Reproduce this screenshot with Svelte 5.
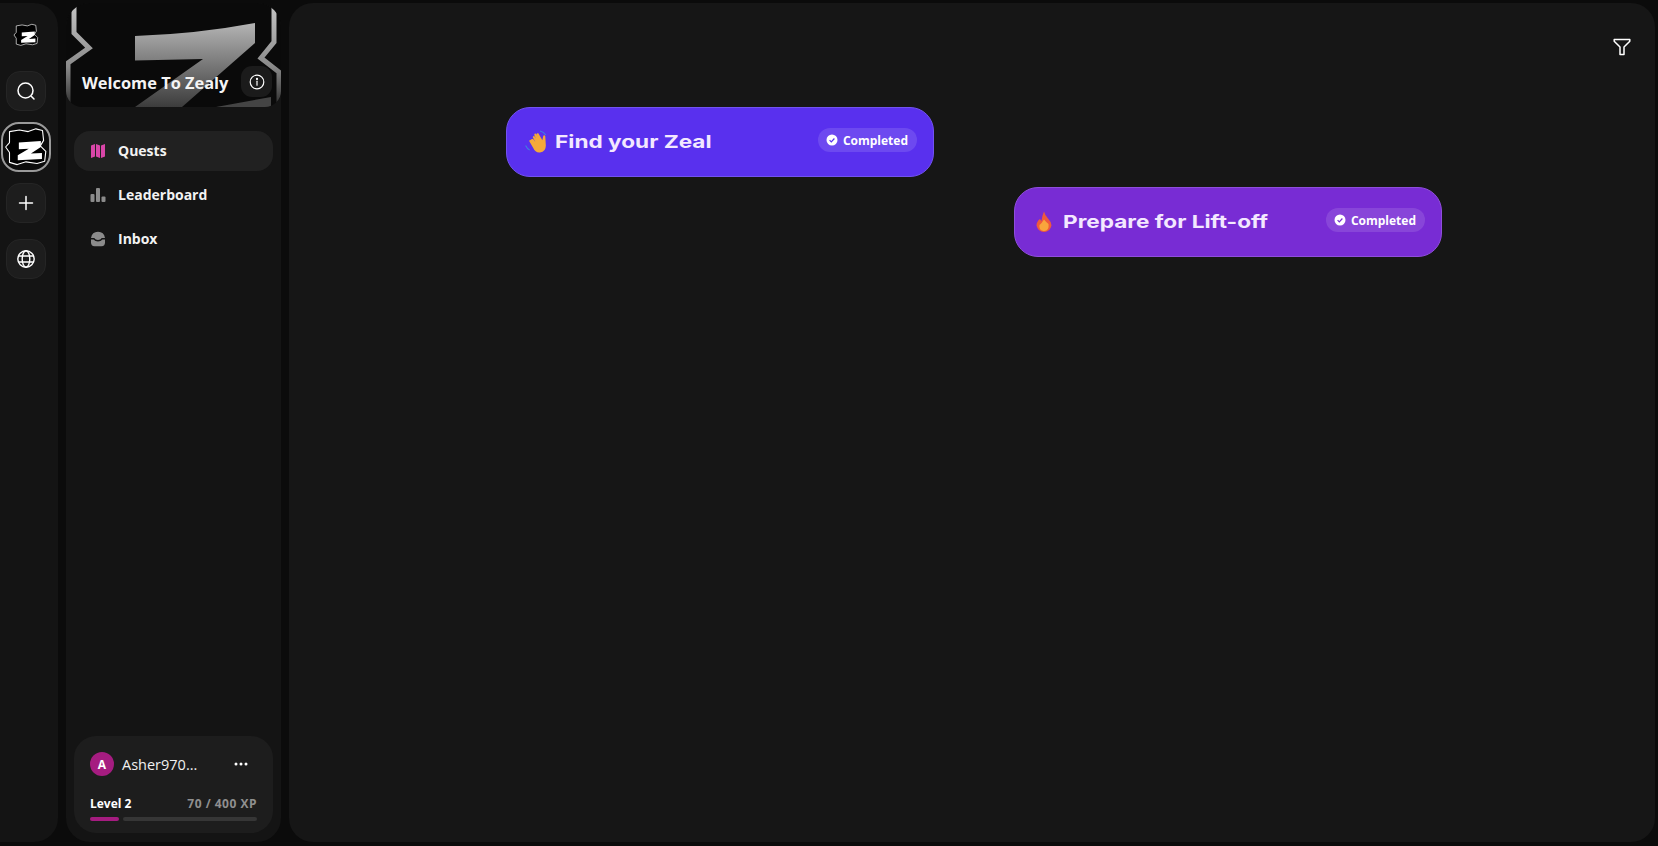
<script>
  // quest map page with the community rail and sidebar
  const navItems = [
    { label: 'Quests', icon: 'map', active: true },
    { label: 'Leaderboard', icon: 'bars' },
    { label: 'Inbox', icon: 'inbox' }
  ];

  const modules = [
    { title: 'Find your Zeal', icon: 'wave', color: 'indigo', check: '#5930ee', x: 217, y: 104 },
    { title: 'Prepare for Lift-off', icon: 'flame', color: 'violet', check: '#782cd4', x: 725, y: 184 }
  ];

  const xp = 70;
  const xpMax = 400;
</script>

{#snippet logo(size)}
  <svg width={size} height={size} viewBox="0 0 40 40" fill="none">
    <path d="M5 6 L14 4.5 L22 6 L29 3.5 L35 5 L36 14 L33 19 L38 24 L37 33 L30 35 L20 33.5 L12 36 L5 34 L5 25 L1.5 20 L5 16 Z" fill="#000" stroke="#fff" stroke-width="1" stroke-linejoin="round" />
    <path d="M13.5 16 L33.5 14.5 L33.5 20 L24.5 26 L34.5 25.5 L34.5 31 L12.5 32 L12.5 27.5 L22.5 21.5 L13.5 22 Z" fill="#fff" />
  </svg>
{/snippet}

<div class="page">
  <aside class="rail">
    <div class="rail-logo">{@render logo(26)}</div>
    <button class="rail-btn" aria-label="Search">
      <svg width="20" height="20" viewBox="0 0 20 20" fill="none" stroke="#fff" stroke-width="1.5" stroke-linecap="round">
        <circle cx="9.5" cy="9.5" r="7.5" />
        <path d="M15.5 15.5 L18 18" />
      </svg>
    </button>
    <div class="rail-current">{@render logo(44)}</div>
    <button class="rail-btn" aria-label="Add">
      <svg width="16" height="16" viewBox="0 0 16 16" fill="none" stroke="#fff" stroke-width="1.5" stroke-linecap="round">
        <path d="M8 1.5 V14.5 M1.5 8 H14.5" />
      </svg>
    </button>
    <button class="rail-btn" aria-label="Explore">
      <svg width="20" height="20" viewBox="0 0 20 20" fill="none" stroke="#fff" stroke-width="1.4">
        <circle cx="10" cy="10" r="8.2" />
        <ellipse cx="10" cy="10" rx="3.8" ry="8.2" />
        <path d="M2.6 7 H17.4 M2.6 13 H17.4" />
      </svg>
    </button>
  </aside>

  <aside class="sidebar">
    <header class="banner">
      <svg class="banner-art" viewBox="0 0 215 104" fill="none" preserveAspectRatio="none">
        <defs>
          <linearGradient id="zfill" x1="0" y1="0" x2="0" y2="1">
            <stop offset="0" stop-color="#b4b4b4" />
            <stop offset="1" stop-color="#3c3c3c" />
          </linearGradient>
          <linearGradient id="edge" x1="0" y1="0" x2="0" y2="1">
            <stop offset="0" stop-color="#c4c4c4" />
            <stop offset="0.6" stop-color="#8a8a8a" />
            <stop offset="1" stop-color="#2a2a2a" />
          </linearGradient>
        </defs>
        <path d="M69 33 Q130 31 189 20 L189 40 L116 104 L69 104 L137 56 L69 57.5 Z" fill="url(#zfill)" />
        <path d="M150 104 L205 94 L205 104 Z" fill="#444" />
        <path d="M8 3 V30 L23 45 L2 60 V104" stroke="url(#edge)" stroke-width="5" />
        <path d="M208 3 V39 L195 55 L213 69 V104" stroke="url(#edge)" stroke-width="5" />
      </svg>
      <h1>Welcome To Zealy</h1>
      <button class="info" aria-label="About">
        <svg width="16" height="16" viewBox="0 0 16 16" fill="none" stroke="#fff" stroke-width="1.2" stroke-linecap="round">
          <circle cx="8" cy="8" r="6.8" />
          <path d="M8 7.2 V11.2" />
          <circle cx="8" cy="4.9" r="0.5" fill="#fff" />
        </svg>
      </button>
    </header>

    <nav class="nav">
      {#each navItems as item (item.label)}
        <div class="nav-item" class:active={item.active}>
          <svg class="nav-icon" width="16" height="16" viewBox="0 0 16 16">
            {#if item.icon === 'map'}
              <path d="M1 2.5 L5 1 V13.5 L1 15 Z M6 1 L10 2.5 V15 L6 13.5 Z M11 2.5 L15 1 V13.5 L11 15 Z" fill="#d946a8" />
            {:else if item.icon === 'bars'}
              <g fill="#8b8b8b">
                <rect x="0.5" y="7" width="4" height="8" rx="1" />
                <rect x="6" y="1" width="4" height="14" rx="1" />
                <rect x="11.5" y="9.5" width="4" height="5.5" rx="1" />
              </g>
            {:else}
              <path d="M8 0.8 Q14 0.8 15 7 L11.8 7 Q10.5 9 8 9 Q5.5 9 4.2 7 L1 7 Q2 0.8 8 0.8 Z M1 8.4 H3.6 Q5 10.5 8 10.5 Q11 10.5 12.4 8.4 H15 V11.5 Q15 15.2 11.5 15.2 H4.5 Q1 15.2 1 11.5 Z" fill="#8b8b8b" />
            {/if}
          </svg>
          <span>{item.label}</span>
        </div>
      {/each}
    </nav>

    <section class="user-card">
      <div class="user-row">
        <div class="avatar">A</div>
        <span class="username">Asher970...</span>
        <svg class="dots" width="14" height="4" viewBox="0 0 14 4" fill="#fff">
          <circle cx="2" cy="2" r="1.5" />
          <circle cx="7" cy="2" r="1.5" />
          <circle cx="12" cy="2" r="1.5" />
        </svg>
      </div>
      <div class="level-row">
        <span class="level">Level 2</span>
        <span class="xp">{xp} / {xpMax} XP</span>
      </div>
      <div class="progress">
        <div class="progress-done"></div>
        <div class="progress-rest"></div>
      </div>
    </section>
  </aside>

  <main class="canvas">
    <button class="filter" aria-label="Filter">
      <svg width="18" height="18" viewBox="0 0 18 18" fill="none" stroke="#fff" stroke-width="1.5" stroke-linejoin="round">
        <path d="M1.2 1.5 H16.8 V3.2 L11 9 V16.5 H7 V9 L1.2 3.2 Z" />
      </svg>
    </button>

    {#each modules as mod (mod.title)}
      <article class="module {mod.color}" style="left: {mod.x}px; top: {mod.y}px">
        {#if mod.icon === 'wave'}
          <svg class="emoji" width="22" height="22" viewBox="1 1.5 19 19">
            <path d="M1.5 14 Q3 17 5 18 M14 1.5 Q17 2 19 5" fill="none" stroke="#3f7fe0" stroke-width="1" />
            <path d="M6 9 L4.5 10 L8 16 Q10 20.5 14 20 Q19 19.5 19 14 L18.5 6 Q18 4.5 16.8 5.5 L16 9.5 L12.5 3.5 Q11 3 11 4.5 L12 6.5 L10.5 3.8 Q9 3.5 9 5 L10.5 8 L9.2 6 Q7.5 5.5 7.8 7.2 L10 11 L8 8.5 Q6.8 8 6 9 Z" fill="#f5a93b" />
          </svg>
        {:else}
          <svg class="emoji" width="22" height="22" viewBox="0 0 22 22">
            <path d="M11 0.5 Q12 4.5 15 7.5 Q18.5 11 18.5 14.5 Q17 21 11 21 Q5 21 3.5 14.5 Q3.5 10.5 7 8 Q8 9.5 8.5 10 Q9 5 11 0.5 Z" fill="#ef5a3c" />
            <path d="M11 8.5 Q13 11 15.5 13 Q16.5 19.5 11 20 Q5.5 19.5 6.5 14 Q9 12 11 8.5 Z" fill="#f9a63c" />
          </svg>
        {/if}
        <h2><span>{mod.title}</span></h2>
        <div class="badge">
          <svg width="12" height="12" viewBox="0 0 12 12">
            <circle cx="6" cy="6" r="5.5" fill="#fff" />
            <path d="M3.6 6.1 L5.3 7.8 L8.4 4.5" fill="none" stroke={mod.check} stroke-width="1.2" />
          </svg>
          <span>Completed</span>
        </div>
      </article>
    {/each}
  </main>
</div>

<style>
  :global(body) {
    margin: 0;
    background: #0b0b0b;
  }

  .page {
    display: grid;
    grid-template-columns: 58px 215px 1fr;
    gap: 8px;
    height: 846px;
    box-sizing: border-box;
    padding: 3px 3px 4px 0;
    overflow: hidden;
    font-family: "Open Sans", "Noto Sans", sans-serif;
    color: #fff;
  }

  button {
    padding: 0;
    border: none;
    background: none;
    display: flex;
    align-items: center;
    justify-content: center;
  }

  .rail {
    background: #141414;
    border-radius: 0 24px 24px 0;
    display: flex;
    flex-direction: column;
    align-items: center;
    box-sizing: border-box;
    padding-right: 6px;
  }

  .rail-logo {
    margin-top: 19px;
    height: 26px;
  }

  .rail-btn {
    width: 40px;
    height: 40px;
    border-radius: 14px;
    background: #1d1d1d;
    border: 1px solid #252525;
    box-sizing: border-box;
  }

  .rail-logo + .rail-btn {
    margin-top: 23px;
  }

  .rail-current {
    width: 50px;
    height: 50px;
    box-sizing: border-box;
    border: 2px solid #9a9a9a;
    border-radius: 18px;
    margin: 11px 0;
    display: flex;
    align-items: center;
    justify-content: center;
    background: #0c0c0c;
  }

  .rail-current + .rail-btn + .rail-btn {
    margin-top: 16px;
  }

  .sidebar {
    background: #141414;
    border-radius: 24px;
    display: flex;
    flex-direction: column;
    overflow: hidden;
    padding-bottom: 9px;
  }

  .banner {
    position: relative;
    height: 104px;
    flex-shrink: 0;
    background: #0a0a0a;
    border-radius: 0 0 16px 16px;
    overflow: hidden;
    display: flex;
    align-items: flex-end;
    justify-content: space-between;
    padding: 0 8px 10px 16px;
    box-sizing: border-box;
  }

  .banner-art {
    position: absolute;
    inset: 0;
    width: 100%;
    height: 100%;
  }

  .banner h1 {
    position: relative;
    margin: 0 0 3px;
    font-size: 16.4px;
    font-weight: 700;
    line-height: 22px;
    color: #f4f4f4;
  }

  .info {
    position: relative;
    width: 31px;
    height: 31px;
    border-radius: 11px;
    background: #1b1b1b;
    margin-right: 1px;
  }

  .nav {
    flex: 1;
    display: flex;
    flex-direction: column;
    gap: 4px;
    padding: 24px 8px 0;
  }

  .nav-item {
    height: 40px;
    border-radius: 16px;
    display: flex;
    align-items: center;
    gap: 12px;
    padding-left: 16px;
    font-size: 14px;
    font-weight: 700;
    color: #f2f2f2;
  }

  .nav-item span {
    margin-top: -2px;
  }

  .nav-item.active {
    background: #212121;
  }

  .user-card {
    margin: 0 8px;
    height: 97px;
    background: #1d1d1d;
    border-radius: 22px;
    padding: 16px 16px 0;
    box-sizing: border-box;
  }

  .user-row {
    display: flex;
    align-items: center;
    gap: 8px;
    height: 24px;
  }

  .avatar {
    width: 24px;
    height: 24px;
    border-radius: 50%;
    background: #a51c80;
    display: flex;
    align-items: center;
    justify-content: center;
    font-size: 12px;
    font-weight: 700;
  }

  .username {
    flex: 1;
    font-size: 14.5px;
    color: #f0f0f0;
  }

  .dots {
    margin-right: 9px;
  }

  .level-row {
    display: flex;
    justify-content: space-between;
    margin-top: 20px;
    font-size: 12px;
    font-weight: 700;
    line-height: 16px;
  }

  .xp {
    color: #8f8f8f;
    letter-spacing: 0.5px;
  }

  .progress {
    display: flex;
    gap: 4px;
    margin-top: 5px;
  }

  .progress-done {
    width: 29px;
    height: 4px;
    border-radius: 2px;
    background: #a51c80;
  }

  .progress-rest {
    flex: 1;
    height: 4px;
    border-radius: 2px;
    background: #363636;
  }

  .canvas {
    position: relative;
    background: #161616;
    border-radius: 24px;
  }

  .filter {
    position: absolute;
    top: 35px;
    right: 24px;
  }

  .module {
    position: absolute;
    width: 428px;
    height: 70px;
    box-sizing: border-box;
    border-radius: 24px;
    display: flex;
    align-items: center;
    padding: 0 16px 0 18px;
  }

  .module.indigo {
    background: #5930ee;
    border: 1px solid #7252f0;
  }

  .module.violet {
    background: #782cd4;
    border: 1px solid #8f4ddc;
  }

  .emoji {
    flex-shrink: 0;
    margin-right: 8px;
    overflow: visible;
  }

  .module h2 {
    flex: 1;
    margin: 0;
    font-family: "Inter", sans-serif;
    font-size: 18px;
    line-height: 22px;
    font-weight: 700;
    color: #f3e8ff;
  }

  .module h2 span {
    display: inline-block;
    transform: scaleX(1.255);
    transform-origin: left center;
  }

  .badge {
    display: flex;
    align-items: center;
    gap: 5px;
    height: 24px;
    padding: 0 9px 0 8px;
    border-radius: 12px;
    background: rgba(255, 255, 255, 0.12);
    font-size: 12px;
    font-weight: 700;
    margin-top: -4px;
  }
</style>
